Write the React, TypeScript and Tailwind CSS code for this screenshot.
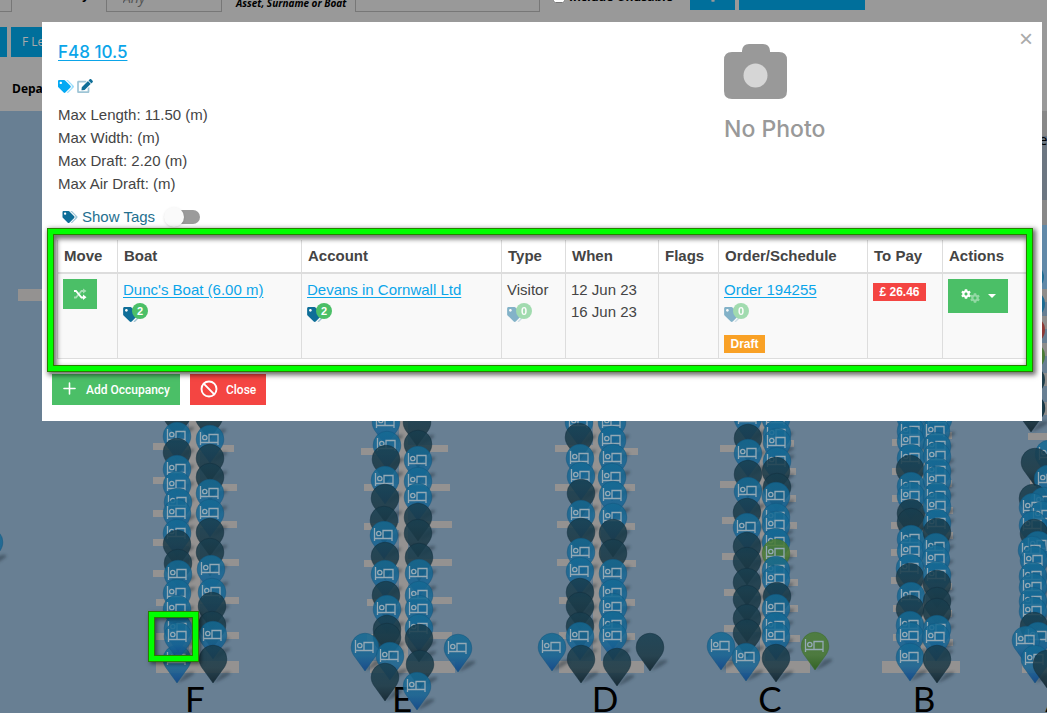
import { useState, type ReactNode } from "react";
import { FaCog } from "react-icons/fa";
import { Ban, Plus } from "lucide-react";

type Kind = "b" | "d" | "g";
type Pin = [x: number, top: number, kind: Kind];

/** Berth pins for each pontoon: horizontal centre, top of the head, colour. */
const PINS: Pin[] = [
  // Pontoon F
  [177, 400, "d"], [177, 422, "b"], [177, 438, "d"], [177, 455, "b"], [177, 471, "b"], [178, 488, "b"],
  [177, 499, "b"], [177, 519, "b"], [177, 530, "d"], [178, 549, "d"], [178, 560, "b"], [177, 579, "b"],
  [177, 645, "b"], [177, 595, "b"], [178, 614, "b"], [178, 622, "b"],
  [209, 402, "d"], [210, 425, "b"], [210, 444, "d"], [210, 463, "d"], [210, 479, "b"], [210, 499, "b"],
  [210, 518, "d"], [210, 538, "d"], [211, 555, "b"], [212, 578, "b"], [212, 592, "d"], [212, 611, "d"],
  [213, 621, "b"], [213, 645, "d"],
  // Pontoon E
  [386, 408, "b"], [387, 431, "b"], [386, 445, "d"], [385, 466, "b"], [385, 484, "d"], [384, 506, "d"],
  [384, 521, "b"], [385, 542, "d"], [385, 560, "b"], [386, 581, "d"], [387, 595, "b"], [387, 615, "d"],
  [387, 623, "d"], [365, 633, "b"], [390, 642, "b"], [385, 663, "d"],
  [417, 408, "d"], [418, 430, "d"], [418, 446, "b"], [418, 467, "b"], [418, 483, "b"], [418, 503, "d"],
  [418, 519, "d"], [419, 543, "d"], [419, 559, "b"], [419, 581, "b"], [419, 595, "b"], [419, 614, "b"],
  [419, 624, "d"], [420, 650, "d"], [458, 634, "b"], [417, 672, "b"],
  // Pontoon D
  [579, 408, "b"], [579, 423, "d"], [580, 444, "b"], [581, 462, "b"], [581, 479, "d"], [581, 500, "b"],
  [581, 518, "d"], [581, 538, "b"], [580, 557, "b"], [580, 578, "d"], [580, 592, "d"], [580, 612, "d"],
  [580, 622, "b"], [581, 645, "d"], [552, 633, "b"],
  [612, 408, "b"], [612, 426, "b"], [613, 444, "b"], [612, 463, "b"], [613, 481, "b"], [613, 503, "b"],
  [613, 519, "d"], [613, 539, "d"], [613, 559, "b"], [613, 579, "b"], [613, 593, "b"], [613, 611, "b"],
  [613, 622, "b"], [617, 648, "d"], [650, 633, "d"],
  // Pontoon C
  [748, 404, "b"], [748, 424, "d"], [748, 439, "b"], [748, 460, "d"], [748, 477, "b"], [747, 498, "d"],
  [747, 513, "b"], [747, 532, "d"], [747, 547, "d"], [747, 568, "d"], [747, 585, "d"], [747, 604, "d"],
  [747, 619, "d"], [721, 632, "b"], [746, 643, "b"],
  [776, 405, "b"], [777, 420, "b"], [777, 428, "b"], [777, 447, "b"], [776, 457, "d"], [777, 473, "d"],
  [776, 482, "b"], [776, 503, "b"], [776, 511, "b"], [776, 528, "b"], [776, 539, "g"], [776, 556, "b"],
  [776, 565, "b"], [777, 582, "d"], [776, 594, "b"], [776, 612, "b"], [776, 622, "b"], [776, 644, "d"],
  [815, 632, "g"],
  // Pontoon B
  [911, 404, "b"], [911, 417, "b"], [911, 427, "b"], [911, 444, "b"], [910, 455, "d"], [911, 472, "b"],
  [911, 482, "b"], [911, 499, "d"], [911, 508, "d"], [911, 525, "b"], [911, 537, "b"], [910, 554, "b"],
  [910, 563, "d"], [911, 582, "b"], [910, 595, "d"], [910, 611, "b"], [910, 622, "b"], [910, 643, "b"],
  [938, 405, "b"], [936, 417, "b"], [937, 432, "b"], [937, 442, "b"], [937, 457, "b"], [937, 466, "b"],
  [937, 482, "b"], [937, 492, "b"], [937, 509, "b"], [937, 518, "d"], [936, 533, "b"], [936, 545, "b"],
  [937, 561, "b"], [937, 570, "d"], [937, 587, "d"], [937, 598, "d"], [937, 615, "b"], [936, 623, "b"],
  [937, 645, "d"],
  // Pontoon A
  [1031, 394, "d"], [1049, 440, "b"], [1035, 448, "d"], [1048, 465, "b"], [1033, 484, "d"], [1044, 487, "b"],
  [1033, 493, "b"], [1043, 501, "b"], [1033, 511, "b"], [1034, 519, "d"], [1038, 531, "b"], [1032, 536, "b"],
  [1034, 546, "b"], [1033, 562, "b"], [1033, 573, "b"], [1033, 587, "b"], [1033, 597, "b"], [1034, 612, "d"],
  [1038, 622, "b"], [1026, 626, "b"], [1035, 645, "b"], [1047, 650, "d"],
  // Entrance
  [-11, 528, "b"],
];

/** Pontoon decking: x, y, width, height. */
const DECKS: [number, number, number, number][] = [
  [189, 411, 11, 260], [153, 443, 36, 7], [153, 477, 36, 7], [153, 510, 36, 7], [153, 539, 36, 7],
  [153, 570, 36, 7], [156, 599, 34, 7], [156, 633, 34, 7], [200, 445, 34, 7], [200, 484, 37, 7],
  [200, 521, 37, 7], [200, 559, 39, 7], [200, 597, 39, 7], [200, 632, 39, 7], [156, 661, 83, 12],
  [18, 289, 30, 12],
  [399, 411, 9, 260], [361, 448, 38, 7], [364, 484, 35, 7], [364, 523, 35, 7], [364, 560, 35, 7],
  [367, 599, 33, 7], [367, 634, 33, 7], [408, 445, 40, 7], [408, 484, 42, 7], [408, 521, 44, 7],
  [408, 559, 44, 7], [408, 597, 44, 7], [408, 632, 44, 7], [370, 661, 85, 12],
  [593, 411, 8, 260], [555, 445, 40, 7], [555, 484, 40, 7], [557, 521, 38, 7], [557, 559, 38, 7],
  [559, 597, 36, 7], [559, 632, 36, 7], [600, 448, 38, 7], [600, 484, 35, 7], [600, 523, 35, 7],
  [600, 560, 36, 7], [600, 599, 35, 7], [600, 633, 35, 7], [559, 661, 85, 12],
  [760, 411, 5, 260], [720, 445, 42, 7], [720, 481, 42, 7], [722, 517, 40, 7], [722, 553, 40, 7],
  [724, 589, 38, 7], [724, 625, 38, 7], [764, 440, 30, 7], [764, 468, 32, 7], [764, 495, 32, 7],
  [764, 522, 33, 7], [764, 550, 33, 7], [764, 579, 34, 7], [764, 605, 34, 7], [764, 635, 36, 7],
  [726, 661, 84, 12],
  [921, 411, 5, 260], [892, 439, 30, 7], [892, 468, 30, 7], [892, 495, 30, 7], [891, 522, 30, 7],
  [891, 549, 30, 7], [891, 577, 30, 7], [893, 605, 30, 7], [893, 634, 30, 7], [926, 432, 26, 7],
  [926, 480, 26, 7], [926, 507, 27, 7], [926, 532, 27, 7], [926, 583, 26, 7], [926, 610, 26, 7],
  [926, 639, 27, 7], [882, 661, 78, 12],
  [1028, 433, 30, 7], [1030, 480, 10, 7], [1022, 661, 30, 12],
];

const LETTERS: [string, number][] = [["F", 195], ["E", 402], ["D", 605], ["C", 770], ["B", 924], ["A", 1057]];

const FILL: Record<Kind, string> = { b: "url(#pinBlue)", d: "url(#pinDark)", g: "url(#pinGreen)" };

function MarinaMap() {
  return (
    <svg aria-label="Marina map" role="img" width="1047" height="602" viewBox="0 111 1047 602" className="block shrink-0">
      <defs>
        <linearGradient id="pinBlue" x1="0" y1="0" x2="0" y2="1">
          <stop offset="0" stopColor="#146a93" />
          <stop offset=".6" stopColor="#186594" />
          <stop offset="1" stopColor="#0c438a" />
        </linearGradient>
        <linearGradient id="pinDark" x1="0" y1="0" x2="0" y2="1">
          <stop offset="0" stopColor="#173e4f" />
          <stop offset=".6" stopColor="#1c3945" />
          <stop offset="1" stopColor="#0d1f28" />
        </linearGradient>
        <linearGradient id="pinGreen" x1="0" y1="0" x2="0" y2="1">
          <stop offset="0" stopColor="#4a7c34" />
          <stop offset=".6" stopColor="#497932" />
          <stop offset="1" stopColor="#2a5f14" />
        </linearGradient>
        <filter id="soft" x="-50%" y="-50%" width="200%" height="200%">
          <feGaussianBlur stdDeviation="1.6" />
        </filter>
      </defs>
      <rect x="0" y="111" width="1047" height="602" fill="#687f93" />
      <rect x="1040" y="111" width="7" height="25" fill="#888888" />
      <rect x="1040" y="136" width="7" height="64" fill="#6c7681" />
      <rect x="1040" y="200" width="7" height="25" fill="#888888" />
      <rect x="1040" y="225" width="7" height="64" fill="#6189a8" />
      {[289, 316, 343, 373, 402].map((y) => (
        <rect key={y} x="1040" y={y} width="7" height="13" fill="#8f8d8b" />
      ))}
      <circle cx="1032" cy="277" r="12" fill="#1d6c93" />
      <circle cx="1031" cy="304" r="14" fill="#1d6c93" />
      <circle cx="1031" cy="330" r="14" fill="#8e3a35" />
      <circle cx="1031" cy="356" r="14" fill="#4b7c38" />
      <circle cx="1031" cy="380" r="14" fill="#1e3d4a" />
      <circle cx="1031" cy="408" r="14" fill="#1e3d4a" />
      <text x="1039" y="145" fontFamily="Open Sans, sans-serif" fontSize="15" fill="#000">e</text>
      {DECKS.map(([x, y, w, h], i) => (
        <rect key={i} x={x} y={y} width={w} height={h} fill="#949291" />
      ))}
      {LETTERS.map(([l, x]) => (
        <text key={l} x={x} y="712" textAnchor="middle" fontFamily="Lato, sans-serif" fontSize="35" fill="#000">
          {l}
        </text>
      ))}
      {PINS.map(([x, y, k], i) => (
        <g key={i} transform={`translate(${x} ${y})`}>
          <path d="M0 38 L9 28 Q19 25 17 29 Q10 35 0 38Z" fill="#1c2a36" opacity=".42" filter="url(#soft)" />
          <path
            d="M0 38 L-11.500 22 C-13 19.500 -13.800 17 -13.800 14 A13.800 13.800 0 0 1 13.800 14 C13.800 17 13 19.500 11.500 22 Z"
            fill={FILL[k]}
            fillOpacity=".86"
            stroke={k === "d" ? "#102c3a" : k === "b" ? "#10557c" : "#396a27"}
            strokeOpacity=".6"
            strokeWidth=".8"
          />
          {k !== "d" && (
            <g fill="none" stroke="#94a9b5" strokeWidth="1.3">
              <path d="M-9.500 7 V20 M-9.500 17.500 H8.500 M8 20 V9.500 H-1 V17" />
              <circle cx="-5.200" cy="12.500" r="2.200" />
            </g>
          )}
        </g>
      ))}
    </svg>
  );
}

function TagsIcon({ className }: { className: string }) {
  return (
    <svg viewBox="0 0 640 512" fill="currentColor" className={className} aria-hidden="true">
      <path d="M497.941 225.941L286.059 14.059A48 48 0 0 0 252.118 0H48C21.49 0 0 21.49 0 48v204.118a48 48 0 0 0 14.059 33.941l211.882 211.882c18.744 18.745 49.136 18.746 67.882 0l204.118-204.118c18.745-18.745 18.745-49.137 0-67.882zM112 160c-26.51 0-48-21.49-48-48s21.49-48 48-48 48 21.49 48 48-21.49 48-48 48z" />
      <path
        opacity=".4"
        d="M625.941 293.823L421.823 497.941c-18.745 18.745-49.137 18.745-67.882 0l-.36-.36L527.64 323.522c16.999-16.999 26.36-39.6 26.36-63.64s-9.362-46.641-26.36-63.64L331.397 0h48.721a48 48 0 0 1 33.941 14.059l211.882 211.882c18.745 18.745 18.745 49.137 0 67.882z"
      />
    </svg>
  );
}

function EditIcon() {
  return (
    <svg viewBox="0 0 576 512" fill="#0f6e98" className="h-[14px] w-4" aria-hidden="true">
      <path d="M402.6 83.2l90.2 90.2c3.8 3.8 3.8 10 0 13.8L274.4 405.6l-92.8 10.3c-12.4 1.4-22.9-9.1-21.5-21.5l10.3-92.8L388.8 83.2c3.8-3.8 10-3.8 13.8 0zm162-22.9l-48.8-48.8c-15.2-15.2-39.9-15.2-55.2 0l-35.4 35.4c-3.8 3.8-3.8 10 0 13.8l90.2 90.2c3.8 3.8 10 3.8 13.8 0l35.4-35.4c15.2-15.3 15.2-40 0-55.2z" />
      <path
        opacity=".4"
        d="M384 346.2V448H64V128h229.8c3.2 0 6.2-1.3 8.5-3.5l40-40c7.6-7.6 2-20.5-8.5-20.5H48C21.5 64 0 85.5 0 112v352c0 26.5 21.5 48 48 48h352c26.5 0 48-21.5 48-48V306.2c0-10.7-12.9-16-20.5-8.5l-40 40c-2.2 2.3-3.5 5.3-3.5 8.5z"
      />
    </svg>
  );
}

function ShuffleIcon() {
  return (
    <svg viewBox="0 0 14 12" className="h-3 w-[14px]" fill="none" stroke="#fff" strokeWidth="1.8" aria-hidden="true">
      <g opacity=".5">
        <path d="M1 9.500 H3 L8.500 3 H10.500" />
        <path d="M10 0.500 L13.500 3 L10 5.500Z" fill="#fff" stroke="none" />
      </g>
      <path d="M1 3 H3 L8.500 9.500 H10.500" />
      <path d="M10 6.500 L13.500 9.300 L10 12Z" fill="#fff" stroke="none" />
    </svg>
  );
}

function TagCount({ count }: { count: number }) {
  return (
    <button
      type="button"
      aria-label={`${count} tags`}
      className={`relative mt-[2px] flex h-5 w-[25px] items-end text-[#0f6e98] ${count ? "" : "opacity-50"}`}
    >
      <TagsIcon className="mb-px h-[15px] w-[19px]" />
      <span className="absolute top-0 right-0 flex size-4 items-center justify-center rounded-full bg-[#4bbf67] text-[11px] leading-4 font-bold text-white">
        {count}
      </span>
    </button>
  );
}

const TH = ({ children }: { children: ReactNode }) => (
  <th className="h-[34px] border-r border-b-2 border-[#ddd] px-[6px] text-left text-[15px] font-bold last:border-r-0">
    {children}
  </th>
);

const TD = ({ children }: { children?: ReactNode }) => (
  <td className="h-[85px] border-r border-b border-[#ddd] bg-[#f9f9f9] px-[5px] pt-[5px] align-top">{children}</td>
);

const LINK = "text-[#0ba5e9] underline underline-offset-2";

export default function App() {
  const [showTags, setShowTags] = useState(false);
  return (
    <div className="relative flex h-screen min-h-0 flex-col overflow-hidden bg-[#999] font-['Liberation_Sans',Arial,sans-serif] text-[15px] text-[#444]">
      <header className="flex h-[111px] shrink-0 flex-col font-['Open_Sans',sans-serif] text-[12px] text-black">
        <div className="flex h-[15px] items-start overflow-hidden">
          <div className="h-3 w-3 border-r border-b border-[#777]" />
          <label htmlFor="country" className="-mt-[13px] w-[94px] pr-[17px] text-right leading-[15px] font-bold">Country</label>
          <input
            id="country"
            readOnly
            value="Any"
            className="-mt-3 h-6 w-[116px] border border-[#777] px-4 pb-[6px] text-[14px] text-[#555] italic"
          />
          <label htmlFor="search" className="-mt-[5px] ml-[14px] w-[119px] text-[10px] leading-4 font-bold italic">
            Asset, Surname or Boat
          </label>
          <input id="search" className="-mt-3 h-6 w-[185px] border border-[#777]" />
          <label className="-mt-[11px] ml-[13px] flex w-[137px] items-end gap-1 whitespace-nowrap leading-[15px] font-bold">
            <input type="checkbox" className="mb-px size-3" />
            Include Unusable
          </label>
          <button type="button" aria-label="Search" className="-mt-4 flex h-[26px] w-[45px] items-end justify-center bg-[#006f9b]">
            <FaCog className="mb-2 size-3 text-[#999]" />
          </button>
          <button type="button" aria-label="Show results" className="-mt-4 ml-1 h-[26px] w-[126px] bg-[#006f9b]" />
        </div>
        <div className="mt-3 flex gap-1">
          <div className="h-[30px] w-[7px] bg-[#006f9b]" />
          <button type="button" className="h-[30px] bg-[#006f9b] px-[11px] text-[#aaa]">F Length</button>
        </div>
        <div className="mt-6 pl-3 leading-4 font-bold">Departures</div>
      </header>
      <MarinaMap />

      <section
        role="dialog"
        aria-label="F48 10.5"
        className="absolute top-[22px] right-[5px] left-[42px] bg-white pb-4"
      >
        <div className="flex h-[218px] pl-4">
          <div className="flex w-[666px] shrink-0 flex-col items-start">
            <a href="#berth" className="mt-[19px] font-[Inter,sans-serif] text-[17px] leading-[22px] font-medium text-[#0ba5e9] underline underline-offset-2">
              F48 10.5
            </a>
            <div className="mt-4 flex items-center gap-[3px]">
              <button type="button" aria-label="Tags"><TagsIcon className="block h-[13px] w-4 text-[#03a9f4]" /></button>
              <button type="button" aria-label="Edit"><EditIcon /></button>
            </div>
            <div className="mt-[10px] leading-[23px]">
              <p>Max Length: 11.50 (m)</p>
              <p>Max Width: (m)</p>
              <p>Max Draft: 2.20 (m)</p>
              <p>Max Air Draft: (m)</p>
            </div>
            <label className="mt-[11px] ml-1 flex cursor-pointer items-center text-[#24708f]">
              <TagsIcon className="mr-1 h-3 w-4 text-[#0f6e98]" />
              Show Tags
              <input type="checkbox" className="peer sr-only" checked={showTags} onChange={() => setShowTags(!showTags)} />
              <span className="relative ml-[17px] h-[14px] w-7 rounded-full bg-[#9b9b9b]">
                <span className={`absolute -top-[3px] size-5 rounded-full bg-[#fafafa] shadow ${showTags ? "left-3" : "-left-2"}`} />
              </span>
            </label>
          </div>
          <div className="flex flex-1 flex-col items-start text-[#999]">
            <svg viewBox="0 0 64 56" className="mt-[22px] h-14 w-16" aria-hidden="true">
              <path
                fill="#999"
                d="M8 8 H18 V7 Q18.500 0 25 0 H39 Q45.500 0 46 7 V8 H55 Q63 8 63 16 V47 Q63 55 55 55 H8 Q0 55 0 47 V16 Q0 8 8 8Z"
              />
              <circle cx="31.500" cy="31.500" r="12" fill="#d6d6d6" />
            </svg>
            <p className="mt-4 font-[Inter,sans-serif] text-[23px] leading-[26px] font-medium">No Photo</p>
          </div>
          <button type="button" aria-label="Close dialog" className="mt-[5px] mr-[9px] h-6 text-[24px] leading-6 text-[#aaa]">×</button>
        </div>

        <div className="px-[15px]">
          <table className="w-full table-fixed border-separate border-spacing-0 border-l border-[#ddd]">
            <colgroup>
              <col className="w-[60px]" />
              <col className="w-[184px]" />
              <col className="w-[200px]" />
              <col className="w-16" />
              <col className="w-[93px]" />
              <col className="w-[60px]" />
              <col className="w-[149px]" />
              <col className="w-[75px]" />
              <col />
            </colgroup>
            <thead>
              <tr>
                <TH>Move</TH>
                <TH>Boat</TH>
                <TH>Account</TH>
                <TH>Type</TH>
                <TH>When</TH>
                <TH>Flags</TH>
                <TH>Order/Schedule</TH>
                <TH>To Pay</TH>
                <TH>Actions</TH>
              </tr>
            </thead>
            <tbody className="leading-[22px]">
              <tr>
                <TD>
                  <button type="button" aria-label="Move" className="flex h-[30px] w-[34px] items-center justify-center bg-[#4bbf67]">
                    <ShuffleIcon />
                  </button>
                </TD>
                <TD>
                  <a href="#boat" className={LINK}>Dunc&apos;s Boat (6.00 m)</a>
                  <TagCount count={2} />
                </TD>
                <TD>
                  <a href="#account" className={LINK}>Devans in Cornwall Ltd</a>
                  <TagCount count={2} />
                </TD>
                <TD>
                  Visitor
                  <TagCount count={0} />
                </TD>
                <TD>
                  <p>12 Jun 23</p>
                  <p>16 Jun 23</p>
                </TD>
                <TD />
                <TD>
                  <a href="#order" className={LINK}>Order 194255</a>
                  <TagCount count={0} />
                  <span className="mt-3 flex h-[18px] w-[41px] items-center justify-center bg-[#f9a126] text-[12px] font-bold text-white">
                    Draft
                  </span>
                </TD>
                <TD>
                  <span className="mt-1 flex h-[18px] w-[53px] items-center justify-center bg-[#f44542] text-[12px] font-bold text-white">
                    £ 26.46
                  </span>
                </TD>
                <TD>
                  <button type="button" aria-label="Actions" className="flex h-[34px] w-[60px] items-center justify-center bg-[#4bbf67] text-white">
                    <FaCog className="mb-1 size-[10px]" />
                    <FaCog className="mt-1 mr-2 -ml-px size-[10px] opacity-40" />
                    <span className="border-x-4 border-t-4 border-x-transparent border-t-white" />
                  </button>
                </TD>
              </tr>
            </tbody>
          </table>
        </div>

        <div className="mt-[15px] flex gap-[10px] pl-[10px] font-[Roboto,sans-serif] text-[12px] font-medium text-white">
          <button type="button" className="flex h-[31px] items-center gap-[7px] bg-[#4bbf67] pr-[10px] pl-2">
            <Plus className="-mt-[2px] size-[19px]" strokeWidth={2} />
            Add Occupancy
          </button>
          <button type="button" className="flex h-[31px] items-center gap-2 bg-[#f44542] px-[10px]">
            <Ban className="-mt-[2px] size-[18px]" strokeWidth={2.5} />
            Close
          </button>
        </div>
      </section>

      <div className="pointer-events-none absolute top-[228px] right-[14px] left-[47px] h-[144px] border border-[#267f00] shadow-[2px_2px_5px_1px_rgba(0,0,0,0.6)]">
        <div className="h-full border-[5px] border-[#0f0]">
          <div className="h-full border border-[#267f00] shadow-[inset_2px_3px_5px_1px_rgba(0,0,0,0.55)]" />
        </div>
      </div>
      <div className="pointer-events-none absolute top-[611px] left-[148px] size-[51px] border border-[#267f00] shadow-[2px_2px_4px_rgba(0,0,0,0.5)]">
        <div className="h-full border-[5px] border-[#0f0]">
          <div className="h-full border border-[#267f00] shadow-[inset_2px_2px_4px_rgba(0,0,0,0.5)]" />
        </div>
      </div>
    </div>
  );
}
